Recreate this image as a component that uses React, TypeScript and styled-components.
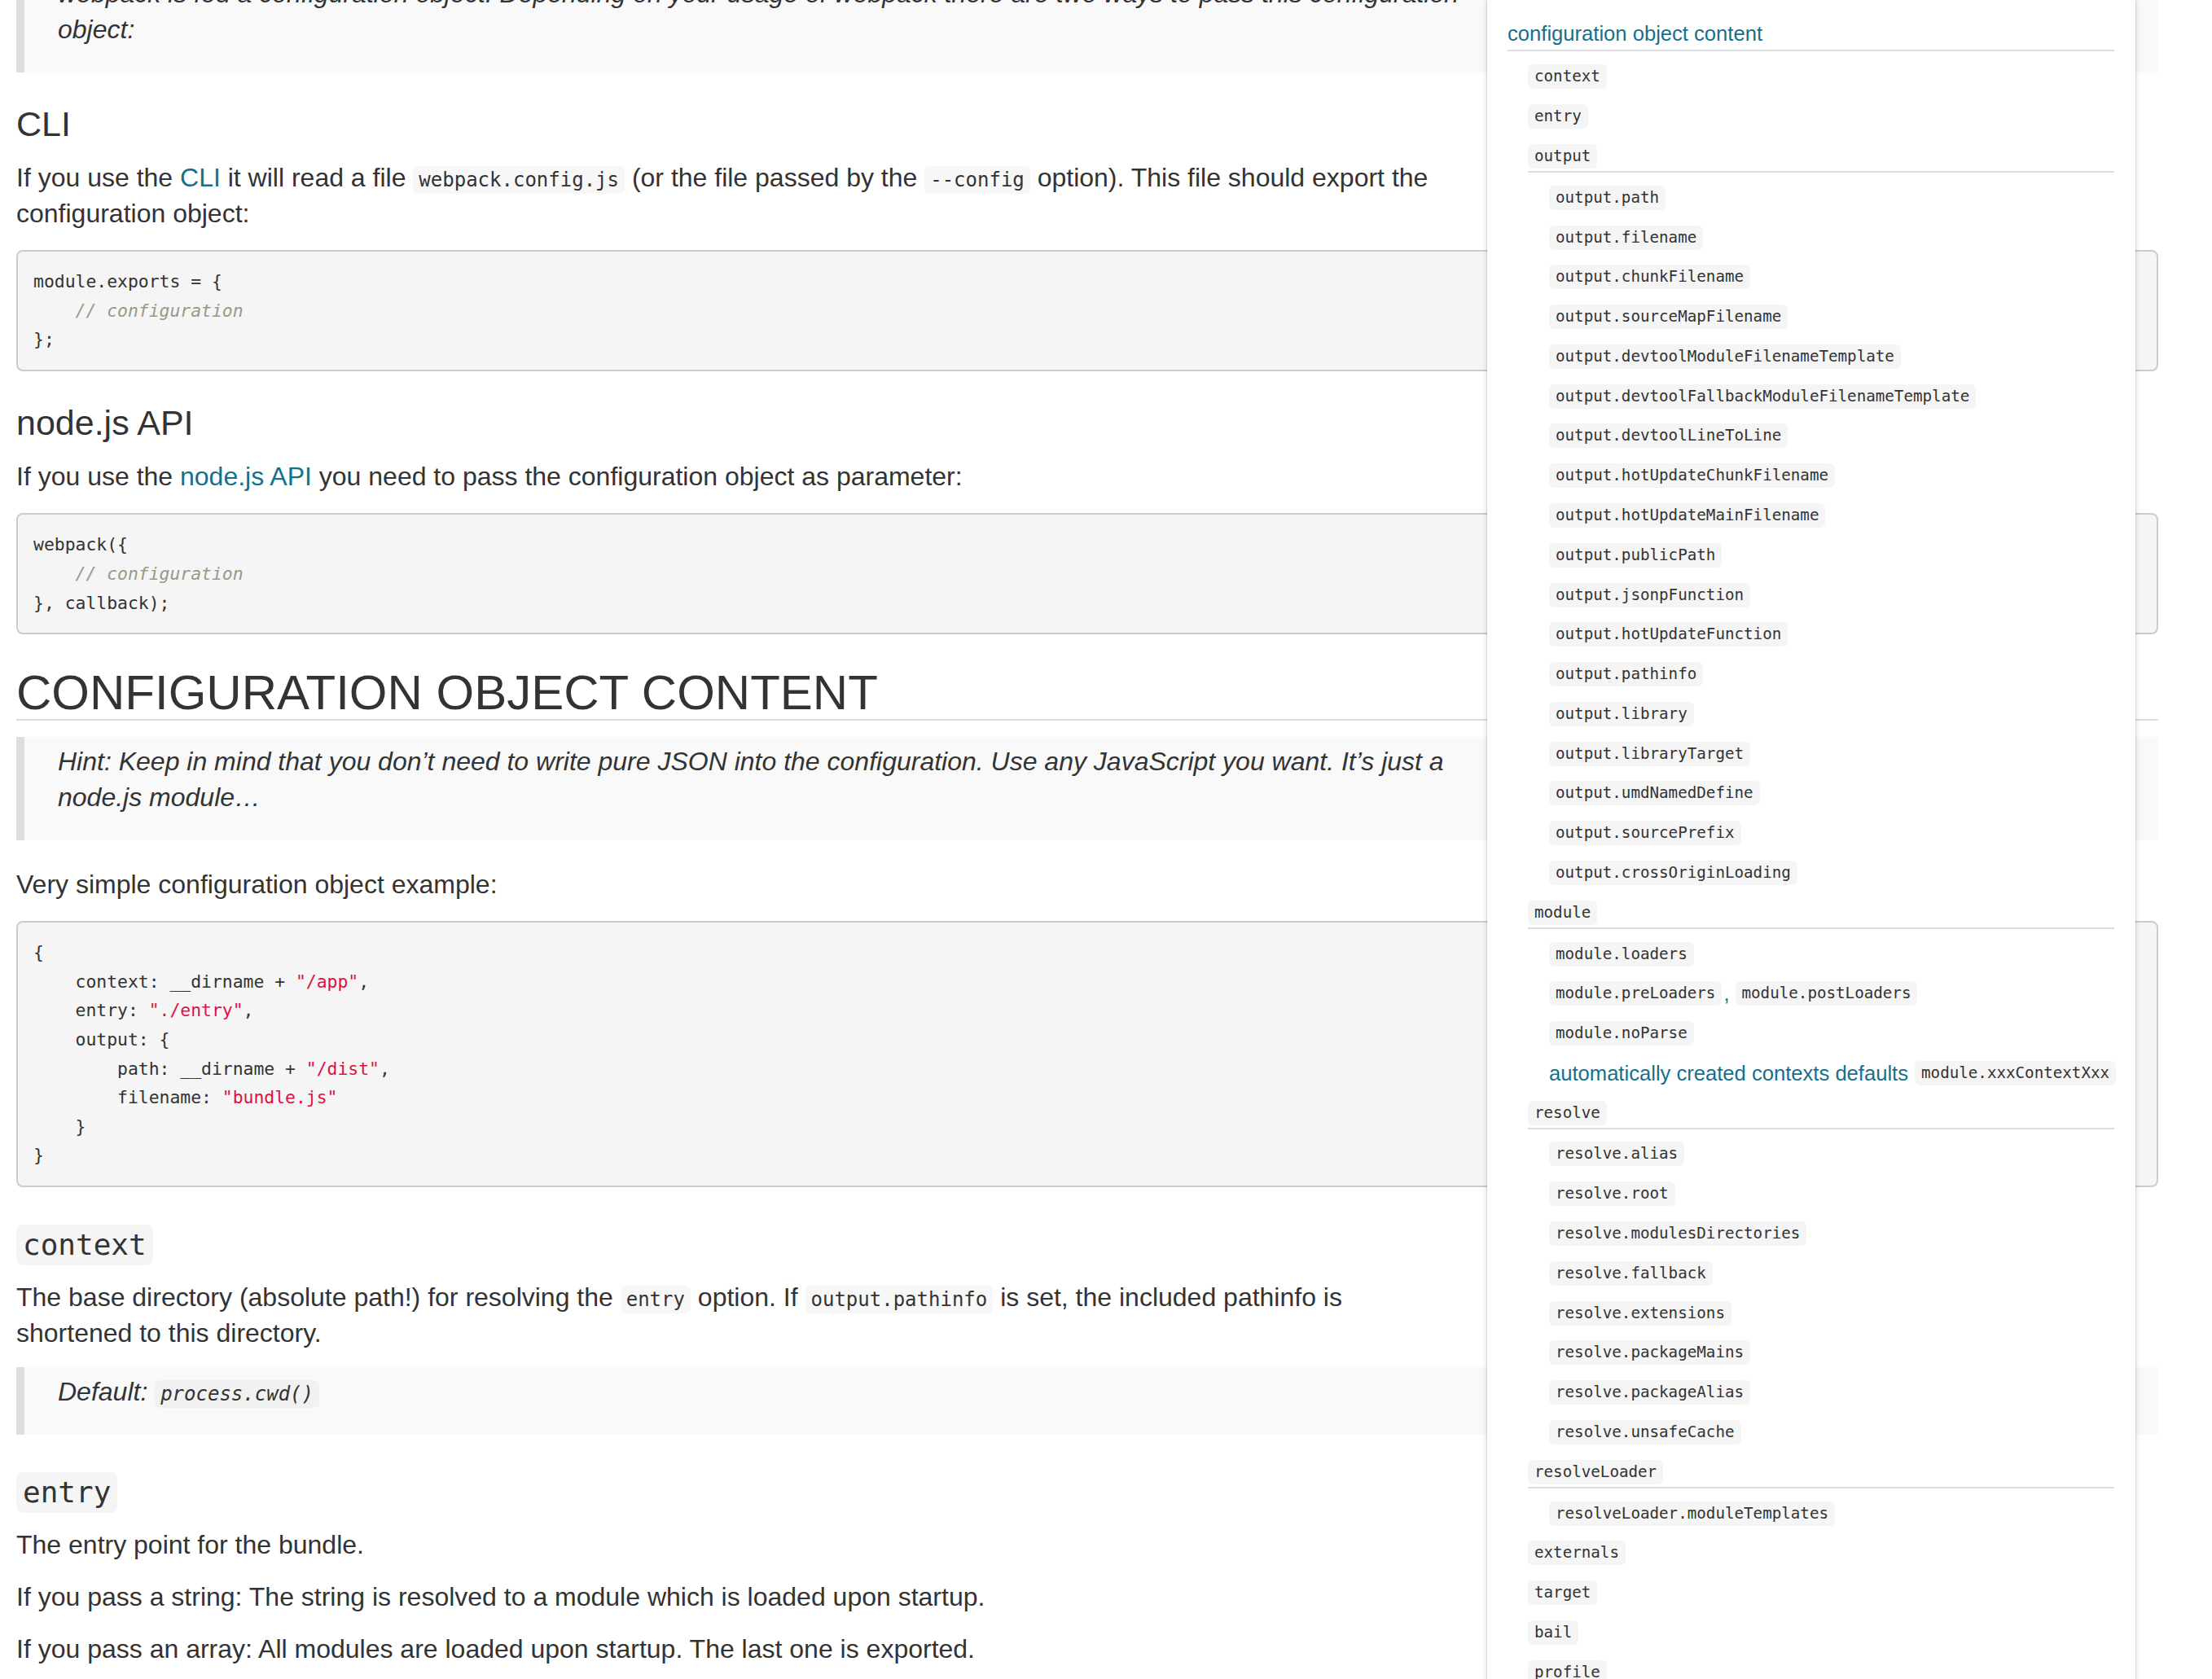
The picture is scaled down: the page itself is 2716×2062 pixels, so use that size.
import React from 'react'
import styled, { createGlobalStyle, css } from 'styled-components'

const mono = `"DejaVu Sans Mono", "Liberation Mono", monospace`
const linkColor = '#16708d'

const GlobalStyle = createGlobalStyle`
  html, body {
    margin: 0;
    padding: 0;
    background: #fff;
    overflow: hidden;
  }
  body {
    font-family: "Liberation Sans", Arial, sans-serif;
    color: #333;
  }
`

type TocEntry = {
  level: 1 | 2
  codes: string[]
  group?: boolean
  lead?: string
}

const toc: TocEntry[] = [
  { level: 1, codes: ['context'] },
  { level: 1, codes: ['entry'] },
  { level: 1, codes: ['output'], group: true },
  { level: 2, codes: ['output.path'] },
  { level: 2, codes: ['output.filename'] },
  { level: 2, codes: ['output.chunkFilename'] },
  { level: 2, codes: ['output.sourceMapFilename'] },
  { level: 2, codes: ['output.devtoolModuleFilenameTemplate'] },
  { level: 2, codes: ['output.devtoolFallbackModuleFilenameTemplate'] },
  { level: 2, codes: ['output.devtoolLineToLine'] },
  { level: 2, codes: ['output.hotUpdateChunkFilename'] },
  { level: 2, codes: ['output.hotUpdateMainFilename'] },
  { level: 2, codes: ['output.publicPath'] },
  { level: 2, codes: ['output.jsonpFunction'] },
  { level: 2, codes: ['output.hotUpdateFunction'] },
  { level: 2, codes: ['output.pathinfo'] },
  { level: 2, codes: ['output.library'] },
  { level: 2, codes: ['output.libraryTarget'] },
  { level: 2, codes: ['output.umdNamedDefine'] },
  { level: 2, codes: ['output.sourcePrefix'] },
  { level: 2, codes: ['output.crossOriginLoading'] },
  { level: 1, codes: ['module'], group: true },
  { level: 2, codes: ['module.loaders'] },
  { level: 2, codes: ['module.preLoaders', 'module.postLoaders'] },
  { level: 2, codes: ['module.noParse'] },
  { level: 2, codes: ['module.xxxContextXxx'], lead: 'automatically created contexts defaults' },
  { level: 1, codes: ['resolve'], group: true },
  { level: 2, codes: ['resolve.alias'] },
  { level: 2, codes: ['resolve.root'] },
  { level: 2, codes: ['resolve.modulesDirectories'] },
  { level: 2, codes: ['resolve.fallback'] },
  { level: 2, codes: ['resolve.extensions'] },
  { level: 2, codes: ['resolve.packageMains'] },
  { level: 2, codes: ['resolve.packageAlias'] },
  { level: 2, codes: ['resolve.unsafeCache'] },
  { level: 1, codes: ['resolveLoader'], group: true },
  { level: 2, codes: ['resolveLoader.moduleTemplates'] },
  { level: 1, codes: ['externals'] },
  { level: 1, codes: ['target'] },
  { level: 1, codes: ['bail'] },
  { level: 1, codes: ['profile'] },
  { level: 1, codes: ['cache'] },
  { level: 1, codes: ['watch'] },
]

export default function App() {
  return (
    <>
      <GlobalStyle />
      <Page>
        <Toc>
          <TocTitle href="#configuration-object-content">configuration object content</TocTitle>
          {toc.map((entry, i) => (
            <TocRow key={i} $level={entry.level} $group={entry.group}>
              {entry.lead && <TocLead>{entry.lead}</TocLead>}
              {entry.codes.map((c, j) => (
                <React.Fragment key={c}>
                  {j > 0 && <TocSep>,</TocSep>}
                  <TocCode>{c}</TocCode>
                </React.Fragment>
              ))}
            </TocRow>
          ))}
        </Toc>

        <ScrolledQuote>
          <p>
            webpack is fed a configuration object. Depending on your usage of webpack there are two ways to pass this
            configuration object:
          </p>
        </ScrolledQuote>

        <H2>CLI</H2>
        <Para>
          If you use the <Link href="#cli">CLI</Link> it will read a file <Code>webpack.config.js</Code> (or the file
          passed by the <Code>--config</Code> option). This file should export the configuration object:
        </Para>
        <Pre>
          {'module.exports = {\n    '}
          <Comment>// configuration</Comment>
          {'\n};'}
        </Pre>

        <H2>node.js API</H2>
        <Para>
          If you use the <Link href="#node-api">node.js API</Link> you need to pass the configuration object as
          parameter:
        </Para>
        <Pre>
          {'webpack({\n    '}
          <Comment>// configuration</Comment>
          {'\n}, callback);'}
        </Pre>

        <H1>CONFIGURATION OBJECT CONTENT</H1>
        <Quote>
          <p>
            Hint: Keep in mind that you don’t need to write pure JSON into the configuration. Use any JavaScript you
            want. It’s just a node.js module…
          </p>
        </Quote>
        <Para>Very simple configuration object example:</Para>
        <Pre>
          {'{\n    context: __dirname + '}
          <Str>"/app"</Str>
          {',\n    entry: '}
          <Str>"./entry"</Str>
          {',\n    output: {\n        path: __dirname + '}
          <Str>"/dist"</Str>
          {',\n        filename: '}
          <Str>"bundle.js"</Str>
          {'\n    }\n}'}
        </Pre>

        <H3>
          <HeadCode>context</HeadCode>
        </H3>
        <Para>
          The base directory (absolute path!) for resolving the <Code>entry</Code> option. If{' '}
          <Code>output.pathinfo</Code> is set, the included pathinfo is shortened to this directory.
        </Para>
        <Quote>
          <p>
            Default: <Code $muted>process.cwd()</Code>
          </p>
        </Quote>

        <H3>
          <HeadCode>entry</HeadCode>
        </H3>
        <Para>The entry point for the bundle.</Para>
        <Para>If you pass a string: The string is resolved to a module which is loaded upon startup.</Para>
        <Para>If you pass an array: All modules are loaded upon startup. The last one is exported.</Para>
        <Para>
          If you pass an object: Multiple entry bundles are created. The key is the chunk name. The value can be a
          string or an array.
        </Para>
      </Page>
    </>
  )
}

const Page = styled.main`
  display: flow-root;
  width: 2630px;
  margin-left: 20px;
  font-size: 32px;
  line-height: 44px;
`

const Toc = styled.aside`
  float: right;
  width: 796px;
  box-sizing: border-box;
  margin: 0 28px 0 32px;
  padding: 23px 26px 0 25px;
  background: #fff;
  box-shadow: 0 0 6px rgba(0, 0, 0, 0.22), 0 0 1px rgba(0, 0, 0, 0.25);
`

const TocTitle = styled.a`
  display: block;
  font-size: 25.6px;
  line-height: 36px;
  color: ${linkColor};
  text-decoration: none;
  padding-bottom: 2px;
  border-bottom: 2px solid #ddd;
  margin-bottom: 7px;
`

const TocRow = styled.div<{ $level: 1 | 2; $group?: boolean }>`
  display: flex;
  align-items: center;
  min-height: 30px;
  padding: 9.4px 0;
  margin-left: ${(p) => (p.$level === 1 ? 25 : 51)}px;
  font-size: 25.6px;
  line-height: 30px;
  ${(p) =>
    p.$group &&
    css`
      padding-bottom: 3px;
      border-bottom: 2px solid #ddd;
      margin-bottom: 6.4px;
    `}
`

const TocCode = styled.code`
  font-family: ${mono};
  font-size: 19.2px;
  line-height: 22px;
  padding: 4px 8px;
  color: #333;
  background: #f5f5f5;
  border-radius: 6px;
  white-space: nowrap;
`

const TocSep = styled.span`
  color: ${linkColor};
  padding: 0 7px 0 2px;
`

const TocLead = styled.span`
  color: ${linkColor};
  margin-right: 8px;
  white-space: nowrap;
`

const Quote = styled.blockquote`
  margin: 20px 0 32px;
  padding: 8px 40px 10px 41px;
  border-left: 10px solid #ddd;
  background: #f9f9f9;
  font-style: italic;

  & > p {
    margin: 0 0 21px;
  }
`

const ScrolledQuote = styled(Quote)`
  margin-top: -38px;
`

const Para = styled.p`
  margin: 0 0 20px;
`

const Link = styled.a`
  color: ${linkColor};
  text-decoration: none;
`

const H1 = styled.h1`
  font-size: 60px;
  line-height: 64px;
  font-weight: normal;
  margin: 40px 0 20px;
  border-bottom: 2px solid #ddd;
`

const H2 = styled.h2`
  font-size: 43px;
  line-height: 47.3px;
  font-weight: normal;
  margin: 40px 0 20px;
`

const H3 = styled.h3`
  font-size: 36px;
  line-height: 50px;
  font-weight: normal;
  margin: 46px 0 17px;
`

const HeadCode = styled.code`
  display: inline-block;
  font-family: ${mono};
  font-size: 36px;
  line-height: 42px;
  padding: 4px 8px;
  background: #f5f5f5;
  border-radius: 8px;
`

const Code = styled.code<{ $muted?: boolean }>`
  font-family: ${mono};
  font-size: 24px;
  line-height: 1;
  padding: 3px 7px;
  border-radius: 6px;
  background: ${(p) => (p.$muted ? '#f1f1f1' : '#f7f7f7')};
`

const Pre = styled.pre`
  margin: 23px 0 0;
  padding: 19px;
  border: 2px solid #ccc;
  border-radius: 8px;
  background: #f5f5f5;
  font-family: ${mono};
  font-size: 21.4px;
  line-height: 35.6px;
  color: #333;
  white-space: pre;
`

const Str = styled.span`
  color: #dd1144;
`

const Comment = styled.span`
  color: #999988;
  font-style: italic;
`
